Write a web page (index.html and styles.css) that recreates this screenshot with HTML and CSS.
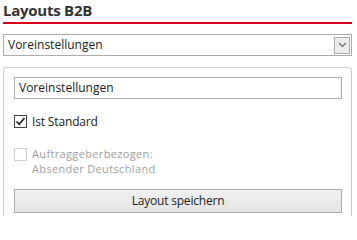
FILE: index.html
```html
<!DOCTYPE html>
<html lang="de">
<head>
<meta charset="utf-8">
<link rel="stylesheet" href="styles.css">
</head>
<body>
<div class="page">
  <h1 class="title">Layouts B2B</h1>
  <div class="select">
    <span class="select-text">Voreinstellungen</span>
    <span class="select-btn">
      <svg width="9" height="6" viewBox="0 0 9 6"><path d="M1 1 L4.5 4.5 L8 1" fill="none" stroke="#6a6a6a" stroke-width="1.2"/></svg>
    </span>
  </div>
  <div class="panel">
    <div class="input">Voreinstellungen</div>
    <div class="check-row">
      <span class="box">
        <svg width="11" height="11" viewBox="0 0 11 11"><path d="M1.5 5.5 L4.2 8.3 L9.5 2" fill="none" stroke="#222" stroke-width="1.6"/></svg>
      </span>
      <span class="label">Ist Standard</span>
    </div>
    <div class="check-row disabled">
      <span class="box"></span>
      <span class="label">
        <span class="line">Auftraggeberbezogen:</span>
        <span class="line">Absender Deutschland</span>
      </span>
    </div>
    <div class="button">Layout speichern</div>
  </div>
</div>
</body>
</html>
```
FILE: styles.css
```css
html, body {
  margin: 0;
  padding: 0;
  background: #ffffff;
  height: 216px;
  overflow: hidden;
}
body {
  font-family: "Open Sans", "Noto Sans", sans-serif;
  font-size: 12px;
  color: #222;
}
.page {
  padding: 0 5px 0 3px;
}
.title {
  margin: 0;
  font-size: 15px;
  font-weight: 700;
  color: #333;
  height: 22px;
  line-height: 20px;
  border-bottom: 2px solid #d6001c;
  letter-spacing: -0.25px;
}
.select {
  margin-top: 10px;
  height: 20px;
  border: 1px solid #acacac;
  display: flex;
  align-items: center;
  justify-content: space-between;
  padding-left: 4px;
}
.select-text {
  line-height: 20px;
}
.select-btn {
  width: 14px;
  height: 15px;
  margin-right: 1px;
  border: 1px solid #acacac;
  background: #ececec;
  display: flex;
  align-items: center;
  justify-content: center;
}
.panel {
  margin-top: 11px;
  border: 1px solid #cccccc;
  border-bottom: none;
  border-radius: 4px 4px 0 0;
  padding: 9px 9px 0 10px;
  height: 140px;
}
.input {
  height: 20px;
  line-height: 20px;
  border: 1px solid #acacac;
  padding-left: 4px;
}
.check-row {
  display: flex;
  align-items: flex-start;
  margin-top: 15px;
}
.check-row.disabled {
  margin-top: 17px;
}
.box {
  width: 11px;
  height: 11px;
  border: 1px solid #444;
  background: #fff;
  display: flex;
  align-items: center;
  justify-content: center;
  margin-top: 1px;
  flex: none;
}
.disabled .box {
  border-color: #cfcfcf;
  margin-top: 2px;
}
.label {
  margin-left: 5px;
  line-height: 15px;
  letter-spacing: -0.15px;
}
.disabled .label {
  color: #a0a0a0;
  display: flex;
  flex-direction: column;
}
.line {
  display: block;
  height: 15px;
  line-height: 15px;
  font-size: 11px;
  letter-spacing: 0.35px;
}
.button {
  margin-top: 13px;
  height: 22px;
  line-height: 22px;
  text-align: center;
  border: 1px solid #adadad;
  background: linear-gradient(#f0f0f0, #e5e5e5);
  letter-spacing: -0.2px;
}
```
